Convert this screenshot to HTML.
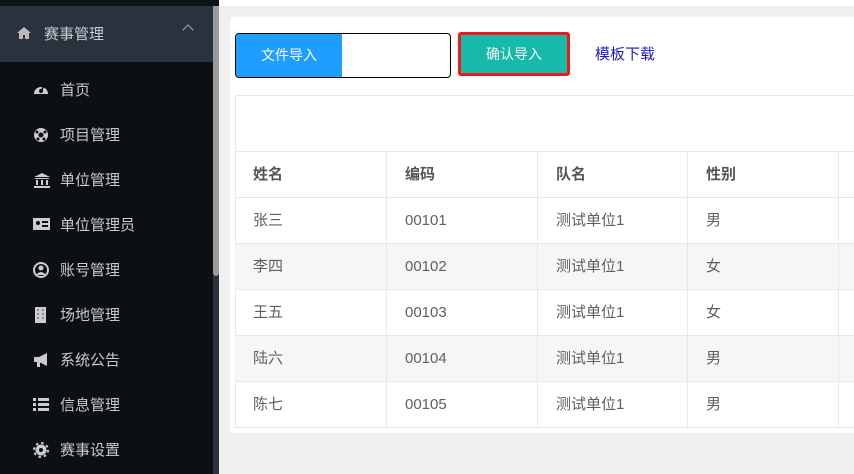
<!DOCTYPE html>
<html><head><meta charset="utf-8"><style>
*{margin:0;padding:0;box-sizing:border-box}
body{width:854px;height:474px;overflow:hidden;background:#f0f0f0;font-family:"Liberation Sans","Noto Sans CJK SC",sans-serif;position:relative}
.side{position:absolute;left:0;top:0;width:213px;height:474px;background:#0c0f14}
.top{position:absolute;left:0;top:0;width:219px;height:6px;background:#0f1318}
.hdr{position:absolute;left:0;top:6px;width:213px;height:56px;background:#2a323d;color:#c9ccd0;font-size:15px}
.hdr .t{position:absolute;left:44px;top:17px}
.hdr svg{position:absolute;left:17px;top:21px}
.hdr .ar{position:absolute;left:184px;top:20px;width:8px;height:8px;border-left:1.5px solid #aaa;border-top:1.5px solid #aaa;transform:rotate(45deg)}
.sb{position:absolute;left:213px;top:6px;width:6px;height:468px;background:#2a323d}
.sb i{position:absolute;left:0;top:0;width:6px;height:270px;background:#9a9a9a;border-radius:0 0 3px 3px}
.it{position:absolute;left:0;width:213px;height:45px;color:#c8cacc;font-size:15px}
.it span{position:absolute;left:60px;top:12px}
.it svg{position:absolute;left:33px;top:15px}
.white{position:absolute;left:219px;top:0;width:635px;height:6px;background:#fff}
.card{position:absolute;left:230px;top:17px;width:630px;height:416px;background:#fff;border-radius:3px}
.fi{position:absolute;left:235px;top:33px;width:216px;height:45px;border:1px solid #000;border-radius:4px;overflow:hidden;background:#fff}
.fi div{width:106px;height:100%;background:#1e9fff;color:#fff;font-size:14px;text-align:center;line-height:43px}
.ok{position:absolute;left:458px;top:32px;width:112px;height:44px;border:3px solid #f01818;border-radius:3px;background:#16baaa;color:#fff;font-size:14px;text-align:center;line-height:38px}
.lk{position:absolute;left:595px;top:43px;color:#1a1ad0;font-size:15px}
.tb{position:absolute;left:235px;top:95px;width:640px;height:333px;border:1px solid #e8e8e8}
.row{position:absolute;left:235px;width:640px;height:46px;border-top:1px solid #e8e8e8;font-size:15px;color:#5f5f5f}
.row div{position:absolute;top:0;height:46px;line-height:45px;padding-left:18px;border-left:1px solid #e8e8e8}
.h{font-weight:bold;color:#555}
.alt{background:#f6f6f6}
</style></head><body>
<div class="side"></div><div class="top"></div>
<div class="hdr"><svg width="14" height="12"><path d="M7 0L0 6h2v6h4V8h2v4h4V6h2z" fill="#bbb"/></svg><span class="t">赛事管理</span><i class="ar"></i></div>
<div class="sb"><i></i></div>
<div class="it" style="top:67px"><svg width="16" height="14"><path d="M1 12A7 7 0 1 1 15 12Z" fill="#ccc"/><circle cx="8" cy="9" r="2" fill="#0c0f14"/><path d="M8 9L11 4" stroke="#0c0f14" stroke-width="1.5"/></svg><span>首页</span></div>
<div class="it" style="top:112px"><svg width="16" height="16"><circle cx="8" cy="8" r="7" fill="#ccc"/><circle cx="8" cy="8" r="2.5" fill="#0c0f14"/><circle cx="4" cy="5" r="1.5" fill="#0c0f14"/><circle cx="12" cy="5" r="1.5" fill="#0c0f14"/><circle cx="5" cy="12" r="1.5" fill="#0c0f14"/><circle cx="11" cy="12" r="1.5" fill="#0c0f14"/></svg><span>项目管理</span></div>
<div class="it" style="top:157px"><svg width="18" height="16"><path d="M1 5L9 1L17 5Z M2 6h14v1H2z M3 8h2v5H3z M8 8h2v5H8z M13 8h2v5h-2z M1 14h16v2H1z" fill="#ccc"/></svg><span>单位管理</span></div>
<div class="it" style="top:202px"><svg width="18" height="14"><rect x="0" y="1" width="17" height="12" fill="#ccc"/><circle cx="5" cy="6" r="2" fill="#0c0f14"/><rect x="9" y="4" width="6" height="2" fill="#0c0f14"/><rect x="9" y="8" width="6" height="2" fill="#0c0f14"/></svg><span>单位管理员</span></div>
<div class="it" style="top:247px"><svg width="16" height="16"><circle cx="8" cy="8" r="7" fill="none" stroke="#ccc" stroke-width="2"/><circle cx="8" cy="6" r="2.5" fill="#ccc"/><path d="M3 13Q8 7 13 13" fill="#ccc"/></svg><span>账号管理</span></div>
<div class="it" style="top:292px"><svg width="16" height="16"><rect x="2" y="0" width="11" height="16" fill="#ccc"/><path d="M4 2h2v2H4zM9 2h2v2H9zM4 6h2v2H4zM9 6h2v2H9zM4 10h2v2H4zM9 10h2v2H9z" fill="#888"/></svg><span>场地管理</span></div>
<div class="it" style="top:337px"><svg width="17" height="16"><path d="M1 5h5l8-4v13l-8-4H1z M4 10h3v5H4z" fill="#ccc"/></svg><span>系统公告</span></div>
<div class="it" style="top:382px"><svg width="17" height="16"><path d="M0 1h3v3H0z M5 1h11v3H5z M0 6h3v3H0z M5 6h11v3H5z M0 11h3v3H0z M5 11h11v3H5z" fill="#ccc"/></svg><span>信息管理</span></div>
<div class="it" style="top:427px"><svg width="16" height="16"><circle cx="8" cy="8" r="5.5" fill="#ccc"/><circle cx="8" cy="8" r="7" fill="none" stroke="#ccc" stroke-width="2" stroke-dasharray="2.5 3"/><circle cx="8" cy="8" r="2" fill="#0c0f14"/></svg><span>赛事设置</span></div>
<div class="white"></div>
<div class="card"></div>
<div class="fi"><div>文件导入</div></div>
<div class="ok">确认导入</div>
<div class="lk">模板下载</div>
<div class="tb"></div>
<div class="row h" style="top:151px"><div style="left:0;border:0">姓名</div><div style="left:151px">编码</div><div style="left:302px">队名</div><div style="left:452px">性别</div><div style="left:603px"></div></div>
<div class="row" style="top:197px"><div style="left:0;border:0">张三</div><div style="left:151px">00101</div><div style="left:302px">测试单位1</div><div style="left:452px">男</div><div style="left:603px"></div></div>
<div class="row alt" style="top:243px"><div style="left:0;border:0">李四</div><div style="left:151px">00102</div><div style="left:302px">测试单位1</div><div style="left:452px">女</div><div style="left:603px"></div></div>
<div class="row" style="top:289px"><div style="left:0;border:0">王五</div><div style="left:151px">00103</div><div style="left:302px">测试单位1</div><div style="left:452px">女</div><div style="left:603px"></div></div>
<div class="row alt" style="top:335px"><div style="left:0;border:0">陆六</div><div style="left:151px">00104</div><div style="left:302px">测试单位1</div><div style="left:452px">男</div><div style="left:603px"></div></div>
<div class="row" style="top:381px"><div style="left:0;border:0">陈七</div><div style="left:151px">00105</div><div style="left:302px">测试单位1</div><div style="left:452px">男</div><div style="left:603px"></div></div>
</body></html>
